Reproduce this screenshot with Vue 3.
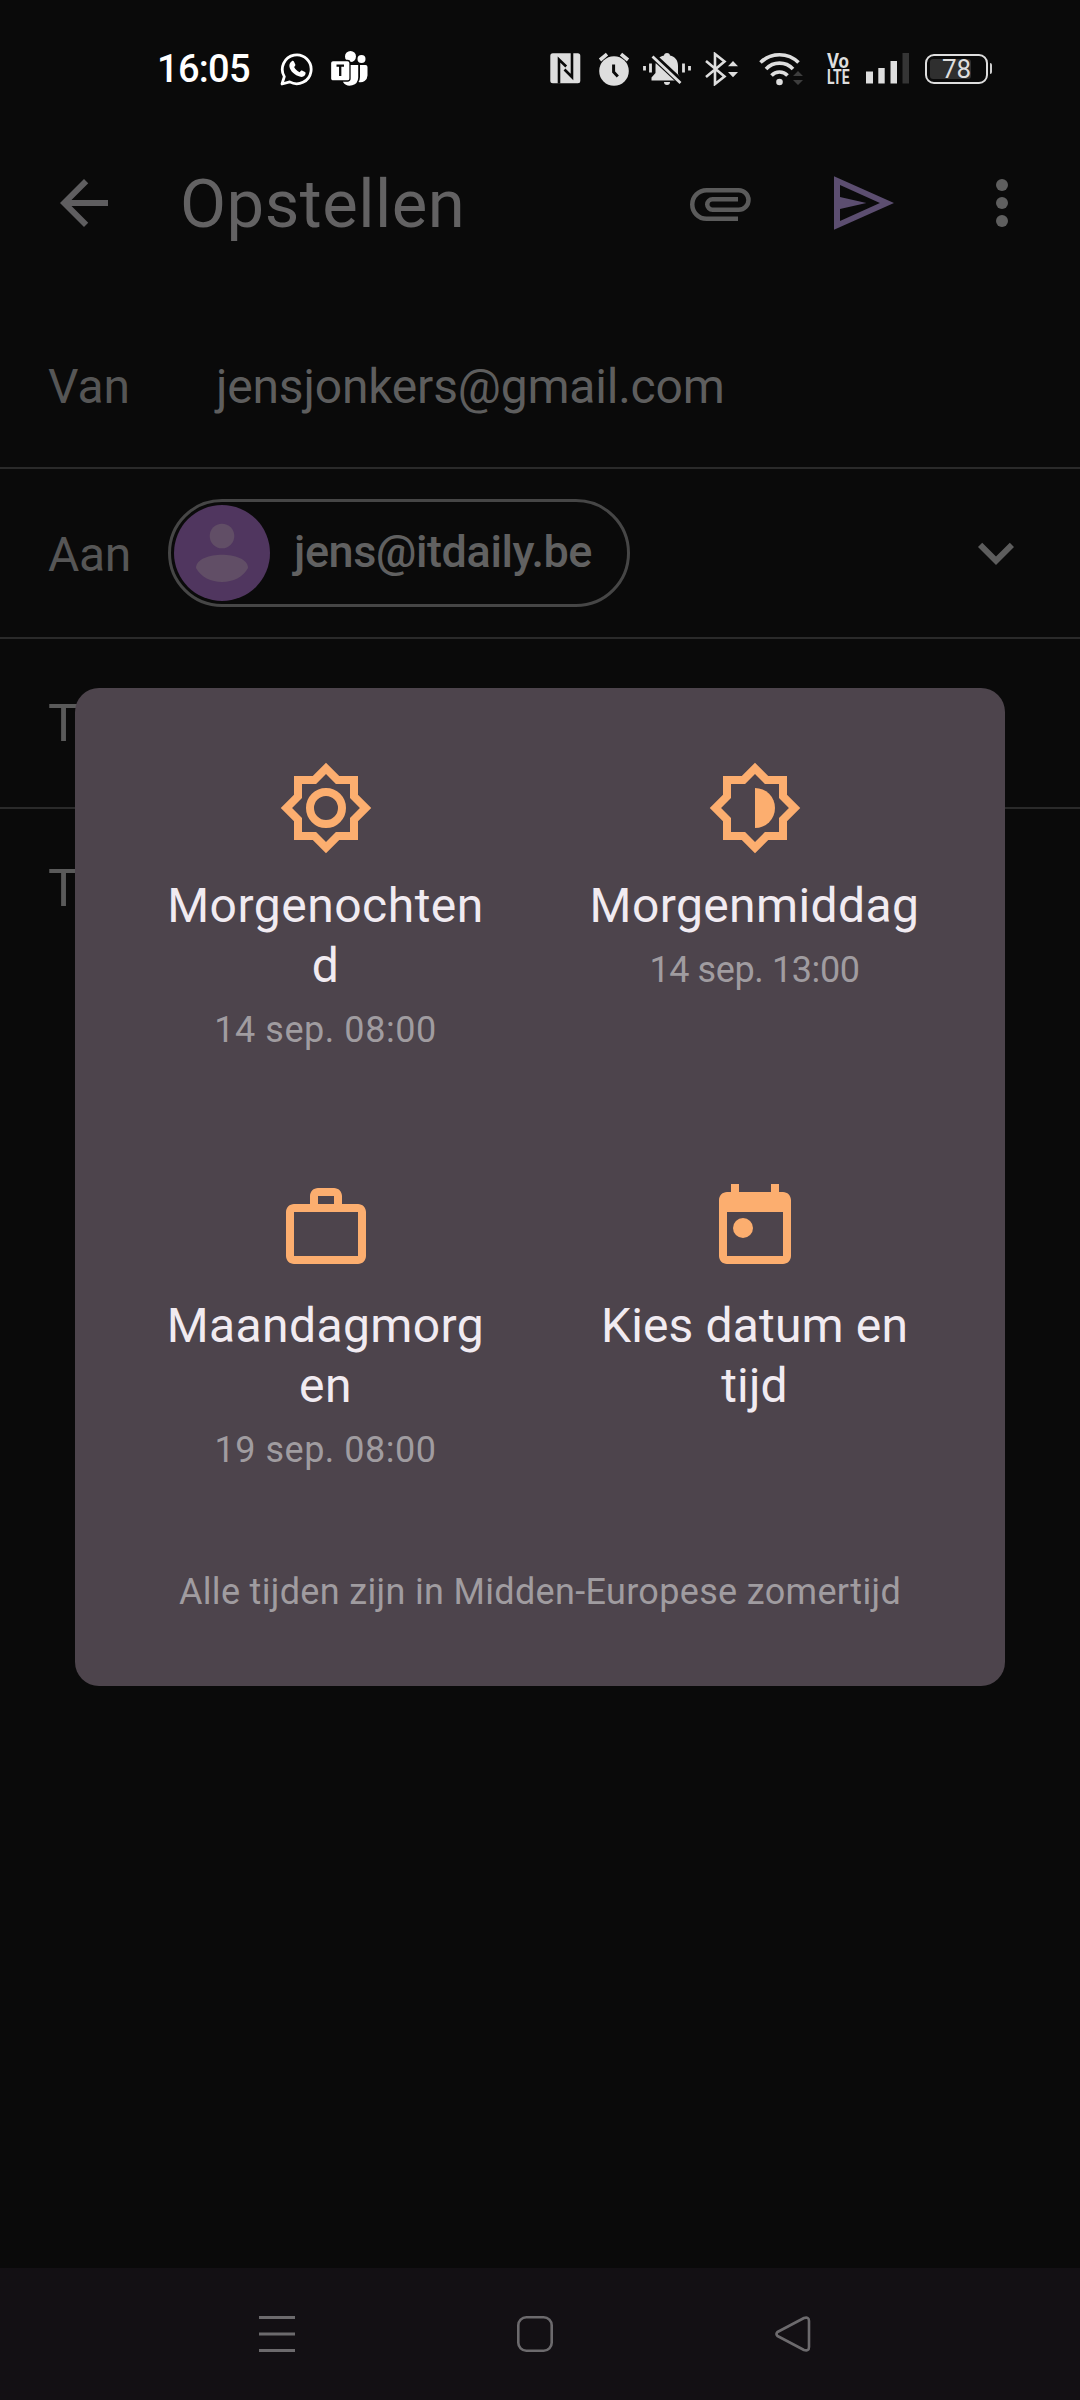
<script setup>
const options = [
  { icon: 'sun', lines: ['Morgenochten', 'd'], time: '14 sep. 08:00', spacing: 0.5, timeSpacing: 0.55 },
  { icon: 'half', lines: ['Morgenmiddag'], time: '14 sep. 13:00', spacing: 0.4, timeSpacing: -0.4 },
  { icon: 'work', lines: ['Maandagmorg', 'en'], time: '19 sep. 08:00', spacing: 0.4, timeSpacing: 0.5 },
  { icon: 'date', lines: ['Kies datum en', 'tijd'], time: '', spacing: 0.15, timeSpacing: 0 }
]
</script>

<template>
  <div class="screen">
    <div class="status">
      <span class="clock">16:05</span>
      <svg class="whatsapp" width="34" height="34" viewBox="0 0 34 34">
        <path d="M2 32 L4.3 24.6 A14.4 14.4 0 1 1 9.7 29.9 Z" fill="none" stroke="#fff" stroke-width="2.8" stroke-linejoin="round" />
        <path d="M11.8 9.2 c.6-.6 1.7-.5 2.1.3 l1.4 3 c.3.7 0 1.2-1.2 2.6 c1.3 2.4 3 4 5.6 5.1 c1-1.3 1.5-1.9 2.3-1.6 l3 1.5 c.8.5.7 1.3.4 2.1 c-.8 2-3 3-5 2.6 c-5.8-1.3-10.2-5.6-11-10.2 c-.3-2.1.7-4.2 2.4-5.4z" fill="#fff" />
      </svg>
      <svg class="teams" width="37" height="36" viewBox="0 0 37 36">
        <circle cx="19.5" cy="5.5" r="5.5" fill="#fff" />
        <circle cx="30.5" cy="8" r="4" fill="#fff" />
        <path d="M29 14 h5.5 a2 2 0 0 1 2 2 v8.5 a7 7 0 0 1 -9 6.5 q1.5-2.5 1.5-5z" fill="#fff" />
        <path d="M12 14 h15.2 v12.5 a8.3 8.3 0 0 1 -15.2 4.5z" fill="#fff" />
        <rect x="-.5" y="9.5" width="19.5" height="20.5" rx="2.5" fill="#fff" stroke="#0a0a0a" stroke-width="1.3" />
        <path d="M5.5 14.7 h7.5 M9.2 14.7 v10.3" stroke="#0a0a0a" stroke-width="2.3" />
      </svg>
      <svg class="nfc" width="31" height="31" viewBox="0 0 31 31">
        <rect x=".3" y=".3" width="30" height="30" rx="2.5" fill="#dedede" />
        <path d="M9 30.5 V6.5 L16.2 13.5 M22 0 V24 L14.5 16.5" fill="none" stroke="#0a0a0a" stroke-width="2.6" />
      </svg>
      <svg class="alarm" width="32" height="34" viewBox="0 0 32 34">
        <circle cx="16" cy="19" r="14.8" fill="#dedede" />
        <path d="M2 8 L9 2.2 M30 8 L23 2.2" stroke="#dedede" stroke-width="3.6" />
        <path d="M15.6 12.5 V20 L19.8 24.5" fill="none" stroke="#0a0a0a" stroke-width="3" />
      </svg>
      <svg class="bell" width="50" height="34" viewBox="0 0 50 34">
        <path d="M9.5 28.5 V25.5 L13.5 21 V14 C13.5 8 17 4.5 22 3.5 C22.5 .3 27.5 .3 28 3.5 C33 4.5 36 8 36 14 V22 L40 28.5z" fill="#dedede" />
        <path d="M22 30 h6 a3 3 0 0 1 -6 0z" fill="#dedede" />
        <path d="M10.5 3.5 L40 31" stroke="#0a0a0a" stroke-width="6.5" />
        <path d="M10.5 4.5 L38.5 31" stroke="#dedede" stroke-width="2.8" />
        <path d="M8.5 11.5 v9 M41.5 11.5 v9 M2.5 14 v4.5 M47.5 14 v4.5" stroke="#dedede" stroke-width="2.8" />
      </svg>
      <svg class="bt" width="35" height="34" viewBox="0 0 35 34">
        <path d="M2 9 L20.5 24.5 L11 32 V2 L20.5 9.5 L2 25" fill="none" stroke="#dedede" stroke-width="2.6" />
        <path d="M24 14.3 L29 9 L34 14.3z M24 20 L29 25.3 L34 20z" fill="#dedede" />
      </svg>
      <svg class="wifi" width="46" height="34" viewBox="0 0 46 34">
        <g fill="none" stroke="#dedede" stroke-width="3.6">
          <path d="M1.5 10.5 A27 27 0 0 1 39.5 10.5" />
          <path d="M7 17 A18.5 18.5 0 0 1 34 17" />
          <path d="M12.5 23.5 A11 11 0 0 1 28.5 23.5" />
        </g>
        <circle cx="20.5" cy="30" r="3.3" fill="#dedede" />
        <path d="M34 24 L39 19 L44 24z M34 28 L39 33 L44 28z" fill="#3d3d3d" />
      </svg>
      <svg class="volte" width="23" height="32" viewBox="0 0 23 32">
        <text x="0" y="15" textLength="22" lengthAdjust="spacingAndGlyphs">Vo</text>
        <text x="0" y="31" textLength="22.5" lengthAdjust="spacingAndGlyphs">LTE</text>
      </svg>
      <svg class="signal" width="43" height="31" viewBox="0 0 43 31">
        <path d="M0 18.5 h7 v12 h-7z M12.3 15 h6.4 v15.5 h-6.4z M24.5 8 h6.5 v22.5 h-6.5z" fill="#dedede" />
        <path d="M36.5 0 h6.5 v30.5 h-6.5z" fill="#353535" />
      </svg>
      <div class="battery"><div class="level"></div><span>78</span></div>
      <div class="tip"></div>
    </div>

    <div class="header">
      <svg class="back" width="72" height="72" viewBox="0 0 24 24"><path fill="#5f5e60" d="M20 11H7.83l5.59-5.59L12 4l-8 8 8 8 1.41-1.41L7.83 13H20z" /></svg>
      <h1>Opstellen</h1>
      <svg class="clip" width="72" height="72" viewBox="0 0 24 24"><path fill="none" stroke="#5b5b5b" stroke-width="1.5" d="M18 17.25H7.5a4.75 4.75 0 0 1 0-9.5H18.25a3.25 3.25 0 0 1 0 6.5H9.5a1.75 1.75 0 0 1 0-3.5H18" /></svg>
      <svg class="send" width="72" height="72" viewBox="0 0 24 24"><path fill="#5c4e70" fill-rule="evenodd" d="M2 3.1v17.8L22 12zM4 6l13.3 6L4 18v-4l8.8-2L4 10z" /></svg>
      <svg class="more" width="72" height="72" viewBox="0 0 24 24"><g fill="#5f5f5f"><circle cx="12" cy="6" r="2" /><circle cx="12" cy="12" r="2" /><circle cx="12" cy="18" r="2" /></g></svg>
    </div>

    <div class="row from"><span class="label">Van</span><span class="mail">jensjonkers@gmail.com</span></div>
    <div class="row to">
      <span class="label">Aan</span>
      <div class="chip">
        <svg width="96" height="96" viewBox="0 0 96 96">
          <circle cx="48" cy="48" r="48" fill="#50365f" />
          <circle cx="48" cy="31" r="12.3" fill="#614e66" />
          <path d="M22 63 C22 54 36 49.8 48 49.8 S74 54 74 63 C69 72 59 77 48 77 S27 72 22 63z" fill="#614e66" />
        </svg>
        <span>jens@itdaily.be</span>
      </div>
      <svg class="chev" width="72" height="72" viewBox="0 0 24 24"><path fill="#5d5d5d" d="M16.59 8.59L12 13.17 7.41 8.59 6 10l6 6 6-6z" /></svg>
    </div>
    <div class="row"><span class="t">T</span></div>
    <div class="body"><span class="t">T</span></div>

    <div class="dialog">
      <div class="grid">
        <div v-for="o in options" :key="o.lines[0]" class="option">
          <svg width="96" height="96" viewBox="0 0 24 24" fill="#fcae6f">
            <g v-if="o.icon === 'sun' || o.icon === 'half'">
              <path fill-rule="evenodd" d="M20 8.69V4h-4.69L12 .69 8.69 4H4v4.69L.69 12 4 15.31V20h4.69L12 23.31 15.31 20H20v-4.69L23.31 12zM18 14.48V18h-3.52L12 20.48 9.52 18H6v-3.52L3.52 12 6 9.52V6h3.52L12 3.52 14.48 6H18v3.52L20.48 12z" />
              <circle v-if="o.icon === 'sun'" cx="12" cy="12" r="4" fill="none" stroke="#fcae6f" stroke-width="2" />
              <path v-else d="M12 7v10a5 5 0 0 0 0-10z" />
            </g>
            <path v-else-if="o.icon === 'work'" fill-rule="evenodd" d="M14 6V4h-4v2zM4 8v11h16V8zM20 6c1.11 0 2 .89 2 2v11c0 1.11-.89 2-2 2H4c-1.11 0-2-.89-2-2V8c0-1.11.89-2 2-2h4V4c0-1.11.89-2 2-2h4c1.11 0 2 .89 2 2v2z" />
            <g v-else>
              <path fill-rule="evenodd" d="M19 3h-1V1h-2v2H8V1H6v2H5c-1.11 0-2 .9-2 2v14c0 1.1.89 2 2 2h14c1.1 0 2-.9 2-2V5c0-1.1-.9-2-2-2zm0 16H5V8h14z" />
              <circle cx="9" cy="12" r="2.5" />
            </g>
          </svg>
          <div class="name" :style="{ letterSpacing: o.spacing + 'px' }"><div v-for="l in o.lines" :key="l">{{ l }}</div></div>
          <div v-if="o.time" class="time" :style="{ letterSpacing: o.timeSpacing + 'px' }">{{ o.time }}</div>
        </div>
      </div>
      <p class="note">Alle tijden zijn in Midden-Europese zomertijd</p>
    </div>

    <div class="nav">
      <svg width="36" height="36" viewBox="0 0 36 36"><path d="M0 1.5h36M0 18h36M0 34.5h36" stroke="#6c6a6d" stroke-width="3" /></svg>
      <svg width="36" height="36" viewBox="0 0 36 36"><rect x="1.3" y="1.3" width="33.4" height="33.4" rx="8" fill="none" stroke="#6c6a6d" stroke-width="2.6" /></svg>
      <svg width="36" height="36" viewBox="0 0 36 36"><path d="M2.5 16 L29 2 Q34 .5 34 5 V31 Q34 35.5 29 34 L2.5 20 Q.5 18 2.5 16z" fill="none" stroke="#6c6a6d" stroke-width="2.6" stroke-linejoin="round" /></svg>
    </div>
  </div>
</template>

<style>
body { background: #0a0a0a; }
</style>

<style scoped>
.screen { position: relative; display: flex; flex-direction: column; width: 1080px; height: 2400px; background: #0a0a0a; font-family: Roboto, sans-serif; overflow: hidden; }
svg { display: block; flex: none; }

.status { display: flex; align-items: center; height: 137px; flex: none; }
.clock { width: 92px; margin-left: 157px; font-size: 38px; font-weight: 500; letter-spacing: -.7px; color: #fff; line-height: 40px; white-space: nowrap; }
.whatsapp { margin-left: 31px; }
.teams { margin-left: 17px; }
.nfc { margin-left: 182px; }
.alarm { margin-left: 17px; }
.bell { margin-left: 12px; }
.bt { margin-left: 12px; }
.wifi { margin-left: 20px; }
.volte { margin-left: 22px; overflow: visible; }
.volte text { font-size: 19.5px; font-weight: 700; fill: #dedede; }
.signal { margin-left: 16px; }
.battery { position: relative; display: flex; align-items: center; justify-content: center; box-sizing: border-box; width: 63px; height: 30px; margin-left: 16px; border: 2.5px solid #dedede; border-radius: 9px; color: #dedede; font-size: 26px; }
.level { position: absolute; left: 3px; top: 3px; bottom: 3px; width: 41px; border-radius: 3px; background: #2f2f2f; }
.battery span { position: relative; line-height: 26px; }
.tip { width: 2px; height: 11px; margin-left: 2px; background: #cfcfcf; border-radius: 0 2px 2px 0; }

.header { display: flex; align-items: center; height: 132px; margin-bottom: 37px; flex: none; }
.back { margin-left: 48px; }
h1 { width: 500px; margin: 0 0 0 60px; padding-top: 1px; font-size: 67px; line-height: 78px; font-weight: 400; letter-spacing: .5px; color: #636263; }
.clip { margin-left: 4px; }
.send { margin-left: 72px; }
.more { margin-left: 66px; }

.row { display: flex; align-items: center; flex: none; box-sizing: content-box; height: 168px; border-bottom: 2px solid #2a2a2a; }
.label, .mail { font-size: 48px; line-height: 60px; color: #565656; }
.from { height: 161px; }
.from .label { width: 168px; margin-left: 48px; }
.mail { letter-spacing: -.2px; color: #5e5e5e; }
.to .label { width: 120px; margin-left: 48px; padding-top: 3px; letter-spacing: -.3px; }
.chip { display: flex; align-items: center; box-sizing: border-box; width: 462px; height: 108px; padding-left: 3px; border: 3px solid #464646; border-radius: 54px; }
.chip span { margin-left: 24px; font-size: 45px; font-weight: 500; line-height: 54px; letter-spacing: -.4px; color: #616161; padding-bottom: 3px; }
.chev { margin-left: 330px; }
.t { margin-left: 48px; font-size: 52px; line-height: 60px; color: #5a5a5a; padding-top: 2px; }
.body { flex: 1; padding-top: 48px; }
.body .t { display: block; }

.dialog { position: absolute; left: 75px; top: 688px; width: 930px; height: 998px; box-sizing: border-box; padding: 72px 36px 0; border-radius: 24px; background: #4d444c; }
.grid { display: grid; grid-template-columns: 1fr 1fr; grid-template-rows: 420px 340px; }
.option { display: flex; flex-direction: column; align-items: center; text-align: center; }
.name { margin-top: 20px; font-size: 48px; line-height: 60px; color: #f1ebf1; }
.time { margin-top: 4px; font-size: 36px; line-height: 60px; color: #a09ca0; }
.note { margin: 0; font-size: 36px; line-height: 144px; letter-spacing: .33px; text-align: center; color: #a09ca0; white-space: nowrap; }

.nav { display: flex; align-items: center; gap: 222px; height: 132px; flex: none; padding-left: 259px; background: #131014; }
</style>
